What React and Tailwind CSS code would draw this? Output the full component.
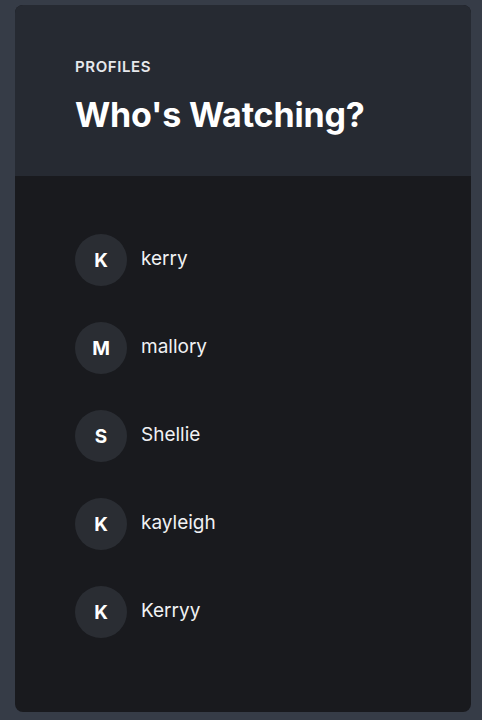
export default function App() {
  const profiles = ["kerry", "mallory", "Shellie", "kayleigh", "Kerryy"];
  return (
    <div className="min-h-[720px] w-full bg-[#363c47] pl-[15px] pr-[11px] pt-[5px] pb-[8px] font-['Inter','Liberation_Sans',sans-serif]">
      <div className="flex h-[707px] flex-col overflow-hidden rounded-lg bg-[#191a1e]">
        <div className="h-[171px] bg-[#262a32] px-[60px] pt-[52px]">
          <div className="text-[15px] leading-[20px] font-semibold tracking-[0.04em] text-[#e6e8ec]">PROFILES</div>
          <h1 className="mt-[17px] text-[34px] leading-[42px] font-bold tracking-[-0.005em] text-white">Who's Watching?</h1>
        </div>
        <div className="flex flex-col gap-[36px] px-[60px] pt-[58px]">
          {profiles.map((name) => (
            <div key={name} className="flex items-center gap-[14px]">
              <div className="flex h-[52px] w-[52px] items-center justify-center rounded-full bg-[#2a2d33] pt-[2px] text-[19px] font-bold text-white">
                {name[0].toUpperCase()}
              </div>
              <div className="-mt-[1px] text-[19px] text-[#f0f1f3]">{name}</div>
            </div>
          ))}
        </div>
      </div>
    </div>
  );
}
